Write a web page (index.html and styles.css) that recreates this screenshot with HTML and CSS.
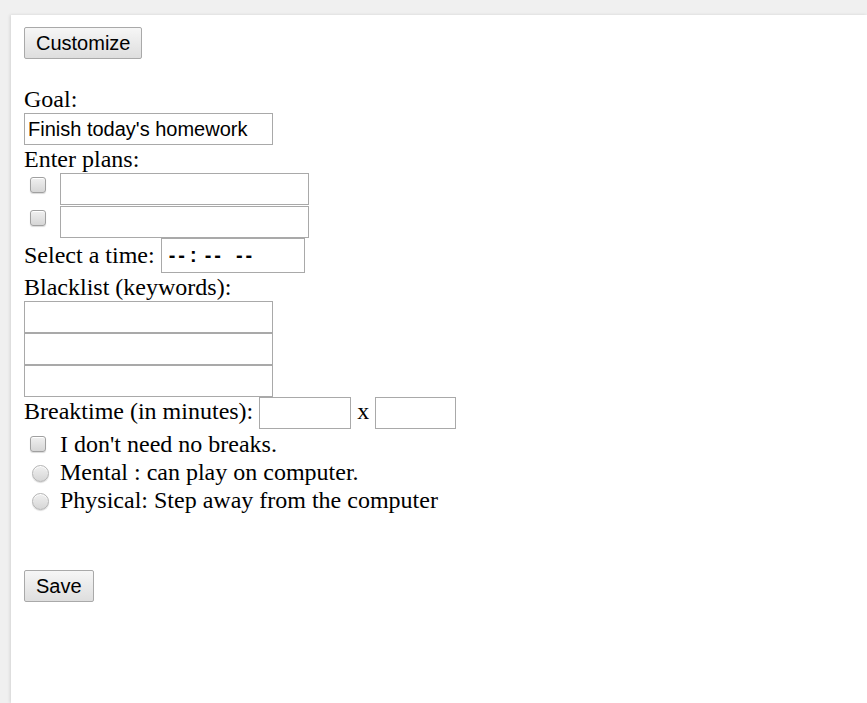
FILE: index.html
```html
<!DOCTYPE html>
<html lang="en">
  <head>
    <meta charset="UTF-8" />
    <title>Focus settings</title>
    <link rel="stylesheet" href="styles.css">
  </head>
  <body>
    <div id="page">
      <button class="btn btn-customize">Customize</button>
      <form id="settings">
        <div class="label">Goal:</div>
        <input class="field field-wide" type="text" value="Finish today's homework" />
        <div class="label">Enter plans:</div>
        <div class="plan">
          <input class="check" type="checkbox" />
          <input class="field field-wide" type="text" />
        </div>
        <div class="plan">
          <input class="check" type="checkbox" />
          <input class="field field-wide" type="text" />
        </div>
        <div class="row row-time">
          <span class="label">Select a time:</span>
          <div class="field time">
            <span class="seg">--</span><span class="colon">:</span><span class="seg">--</span><span class="seg seg-ampm">--</span>
          </div>
        </div>
        <div class="label">Blacklist (keywords):</div>
        <input class="field field-wide" type="text" />
        <input class="field field-wide" type="text" />
        <input class="field field-wide" type="text" />
        <div class="row row-break">
          <span class="label">Breaktime (in minutes):</span>
          <input class="field field-mins" type="text" />
          <span class="label">x</span>
          <input class="field field-times" type="text" />
        </div>
        <label class="option">
          <input class="check" type="checkbox" />
          I don't need no breaks.
        </label>
        <label class="option">
          <input class="radio" type="radio" name="kind" />
          Mental : can play on computer.
        </label>
        <label class="option">
          <input class="radio" type="radio" name="kind" />
          Physical: Step away from the computer
        </label>
        <button class="btn btn-save" type="button">Save</button>
      </form>
    </div>
  </body>
</html>
```

FILE: styles.css
```css
html,
body {
  margin: 0;
  padding: 0;
  background: #f0f0f0;
}

#page {
  margin: 15px 0 0 11px;
  padding: 12px 0 0 13px;
  min-height: calc(100vh - 15px);
  box-sizing: border-box;
  background: #fff;
  box-shadow: -1px 0 3px rgba(0, 0, 0, 0.12);
  font-family: "Liberation Serif", serif;
  font-size: 24px;
  color: #000;
}

.btn {
  display: block;
  height: 32px;
  margin: 0;
  padding: 0 11px;
  border: 1px solid #a9a9a9;
  border-radius: 2px;
  background: linear-gradient(#f6f6f6, #dedede);
  font-family: "Liberation Sans", Arial, sans-serif;
  font-size: 20px;
  color: #000;
}

.btn-customize {
  margin-bottom: 26px;
}

.btn-save {
  margin-top: 56px;
}

.label {
  display: block;
  height: 28px;
  line-height: 28px;
  white-space: nowrap;
}

.field {
  display: block;
  height: 32px;
  margin: 0;
  padding: 0 3px;
  box-sizing: border-box;
  border: 1px solid #a9a9a9;
  border-radius: 0;
  background: #fff;
  font-family: "Liberation Sans", Arial, sans-serif;
  font-size: 20px;
  color: #000;
  outline: none;
}

.field-wide {
  width: 249px;
}

.field-mins {
  width: 92px;
}

.field-times {
  width: 81px;
}

.plan {
  display: flex;
  align-items: flex-start;
  height: 32px;
}

.plan + .plan {
  margin-top: 1px;
}

.plan .check {
  margin: 4px 14px 0 6px;
}

.row {
  display: flex;
  align-items: flex-start;
}

.row-time {
  height: 35px;
}

.row-time .label {
  margin: 3px 6px 0 0;
}

.time {
  display: flex;
  align-items: center;
  width: 144px;
  height: 35px;
  padding-left: 7px;
  font-weight: bold;
  letter-spacing: 3px;
}

.time .colon {
  margin: 0 5px 0 2px;
}

.time .seg-ampm {
  margin-left: 12px;
}

.row-break {
  height: 33px;
  gap: 6px;
}

.option {
  display: flex;
  align-items: flex-start;
  height: 28px;
  line-height: 28px;
  white-space: nowrap;
}

.check,
.radio {
  appearance: none;
  -webkit-appearance: none;
  flex: none;
  box-sizing: border-box;
  background: linear-gradient(#f0f0f0, #d6d6d6);
  box-shadow: inset 0 1px 0 #fff, 0 1px 1px rgba(0, 0, 0, 0.15);
}

.check {
  width: 16px;
  height: 16px;
  border: 1px solid #a0a0a0;
  border-radius: 3px;
}

.radio {
  width: 17px;
  height: 17px;
  border: 1px solid #b4b4b4;
  border-radius: 50%;
}

.option .check {
  margin: 6px 14px 0 6px;
}

.option .radio {
  margin: 7px 11px 0 8px;
}
```
